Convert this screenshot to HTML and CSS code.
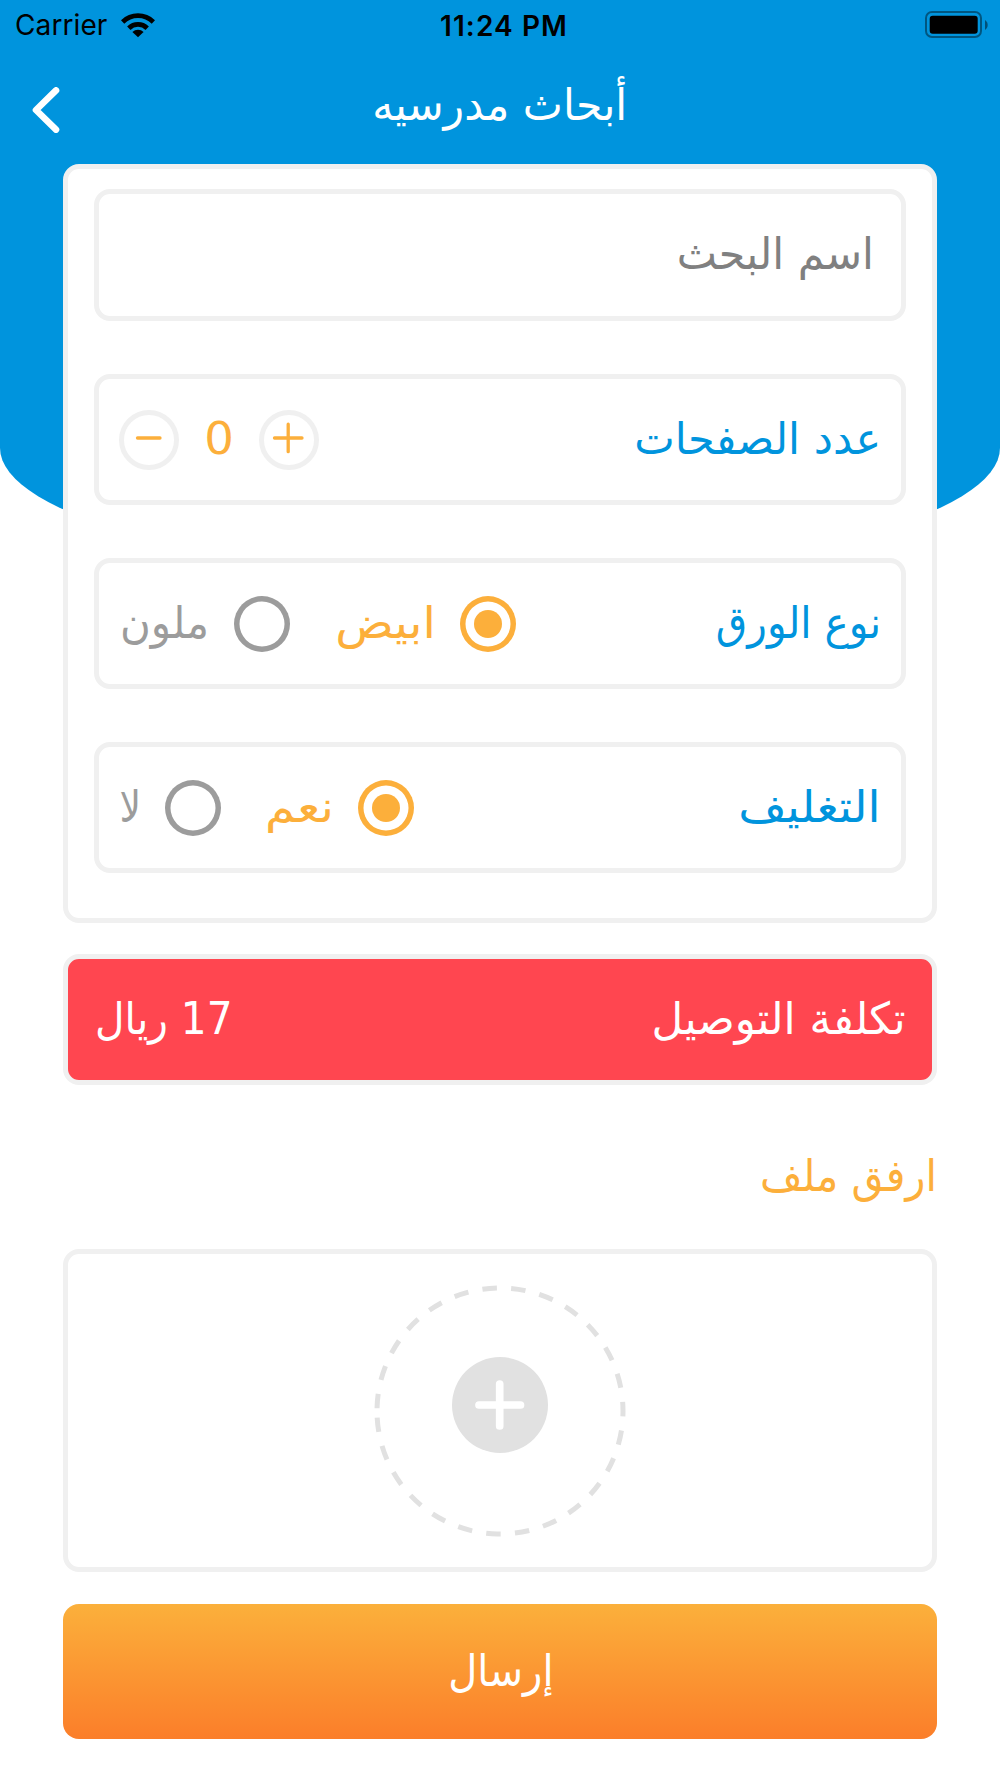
FILE: index.html
```html
<!DOCTYPE html>
<html lang="ar">
<head>
<meta charset="utf-8">
<title>أبحاث مدرسيه</title>
<link rel="stylesheet" href="styles.css">
</head>
<body>
<div class="screen">
  <header class="hero">
    <div class="status">
      <div class="carrier"><span>Carrier</span>
        <svg class="wifi" width="34" height="25" viewBox="0 0 34 25"><path d="M17 24.300l-5.600-5.300a8.200 8.200 0 0 1 11.200 0z"/><path d="M7.800 15.200a13.200 13.200 0 0 1 18.400 0" fill="none" stroke="#000" stroke-width="4.800"/><path d="M1.600 9a22 22 0 0 1 30.800 0" fill="none" stroke="#000" stroke-width="4.800"/></svg>
      </div>
      <div class="clock">11:24 PM</div>
      <svg class="battery" width="64" height="28" viewBox="0 0 64 28"><rect x="1" y="1" width="55" height="25" rx="6" fill="none" stroke="#000" stroke-opacity=".42" stroke-width="2"/><rect x="4.700" y="4.700" width="48" height="18" rx="3"/><path d="M60 9a6 6 0 0 1 0 10z" fill-opacity=".45"/></svg>
    </div>
    <div class="nav">
      <svg class="back" width="28" height="46" viewBox="0 0 28 46"><path d="M24 3.400L4 23L24 42.600" fill="none" stroke="#fff" stroke-width="6.600" stroke-linecap="round" stroke-linejoin="round"/></svg>
      <h1 class="title"><span class="t-title">أبحاث مدرسيه</span></h1>
    </div>
  </header>
  <main class="content" dir="rtl">
    <section class="card">
      <div class="field field-input"><span class="t-name">اسم البحث</span></div>
      <div class="field"><span class="t-pages">عدد الصفحات</span>
        <div class="stepper">
          <div class="round"><svg width="50" height="50" viewBox="0 0 50 50"><path d="M10.500 23H38M24.200 9.200V36.700"/></svg></div>
          <span class="count">0</span>
          <div class="round"><svg width="50" height="50" viewBox="0 0 50 50"><path d="M13.500 23H36"/></svg></div>
        </div>
      </div>
      <div class="field"><span class="t-paper">نوع الورق</span>
        <div class="options">
          <div class="option on"><i class="radio"></i><span class="t-white">ابيض</span></div>
          <div class="option"><i class="radio"></i><span class="t-color">ملون</span></div>
        </div>
      </div>
      <div class="field"><span class="t-cover">التغليف</span>
        <div class="options">
          <div class="option on"><i class="radio"></i><span class="t-yes">نعم</span></div>
          <div class="option"><i class="radio"></i><span class="t-no">لا</span></div>
        </div>
      </div>
    </section>
    <section class="cost"><span class="t-cost">تكلفة التوصيل</span><span class="t-price">17 ريال</span></section>
    <h2 class="attach"><span class="t-attach">ارفق ملف</span></h2>
    <section class="upload">
      <svg width="252" height="252" viewBox="0 0 252 252"><path d="M3 126A123 123 0 0 1 249 126A123 123 0 0 1 3 126" transform="rotate(1.250 126 126)" fill="none" stroke="#e1e1e1" stroke-width="5" stroke-dasharray="14.500 14.300"/><circle cx="126" cy="120" r="48" fill="#e1e1e1"/><path d="M105 120H146.500M125.700 99V141" stroke="#fff" stroke-width="7.700" stroke-linecap="round"/></svg>
    </section>
    <button class="submit"><span class="t-send">إرسال</span></button>
  </main>
</div>
</body>
</html>
```
FILE: styles.css
```css
* { box-sizing: border-box; }
body { margin: 0; background: #fff; font-family: "DejaVu Sans", "Noto Sans", sans-serif; }
.screen { width: 1000px; height: 1778px; display: grid; background: #fff; overflow: hidden; }
.hero, .content { grid-area: 1 / 1; }
.hero { height: 574px; background: #0094dd; border-radius: 0 0 500px 500px / 0 0 126px 126px; }
.status { height: 50px; display: grid; grid-template-columns: 1fr auto 1fr; align-items: center; padding: 0 11px 0 15px; font-family: Inter, sans-serif; font-size: 28px; color: #000; }
.carrier { display: flex; align-items: center; gap: 14px; letter-spacing: 0.1px; }
.clock { font-weight: 600; letter-spacing: 1.1px; padding-left: 4px; padding-top: 1px; }
.battery { justify-self: end; margin-top: -1px; }
.nav { height: 114px; display: grid; grid-template-columns: 100px 1fr 100px; align-items: center; }
.back { margin: 6px 0 0 32px; }
.title { margin: 0; text-align: center; color: #fff; font-size: 44px; font-weight: 400; line-height: 60px; }
.content { padding: 164px 63px 0; z-index: 1; font-size: 44px; line-height: 60px; }
.content span, .title span { display: inline-block; white-space: nowrap; transform-origin: right center; }
.card { height: 759px; border: 5px solid #f0f0f0; border-radius: 16px; background: #fff; padding: 20px 26px; display: flex; flex-direction: column; gap: 53px; }
.field { height: 131px; flex: none; border: 5px solid #f0f0f0; border-radius: 16px; display: flex; align-items: center; justify-content: space-between; padding: 0 20px; color: #0094dd; }
.field-input { height: 132px; color: #808080; padding: 0 27px; }
.stepper { display: flex; align-items: center; color: #fcaf3b; }
.round { width: 60px; height: 60px; border: 5px solid #f0f0f0; border-radius: 50%; }
.round svg { display: block; fill: none; stroke: #fcaf3b; stroke-width: 3.3; stroke-linecap: round; }
.content .count { width: 80px; text-align: center; transform-origin: center; transform: translateY(-1px) scaleX(1.06); }
.options { display: flex; gap: 46px; }
.option { display: flex; align-items: center; gap: 27px; color: #9c9c9c; }
.on { color: #fcaf3b; }
.radio { width: 56px; height: 56px; box-shadow: inset 0 0 0 5.5px currentColor; border-radius: 50%; display: grid; place-items: center; }
.on .radio::after { content: ""; width: 28px; height: 28px; border-radius: 50%; background: currentColor; }

/* Optical width of each Arabic label */
.title .t-title { transform-origin: center; transform: translateY(-2px) scaleX(.968); }
.t-name { transform: translateY(-1px) scaleX(.972); }
.t-pages { transform: translateY(-1px) scaleX(.979); }
.t-paper { transform: translateY(-1px) scaleX(.923); }
.t-cover { transform: translateY(-1px) scaleX(1.066); }
.t-white { width: 97px; transform: translate(3px, -1px) scaleX(1.1); }
.t-color { width: 88px; transform: translate(2px, -1px) scaleX(.955); }
.t-yes { width: 64px; transform: translate(3px, -1px) scaleX(1.1); }
.t-no { width: 19px; transform: translate(3px, -1px) scaleX(.86); }
.t-cost { transform: translateY(-1px) scaleX(.99); }
.content .t-price { transform-origin: left center; transform: translateY(-1px) scaleX(.924); }
.t-attach { transform: scaleX(.936); }
.content .t-send { transform-origin: center; transform: translate(1px, -1px) scaleX(.91); }

.cost { height: 131px; margin-top: 31px; border: 5px solid #f0f0f0; border-radius: 16px; background: #ff4650; padding: 0 26px 0 27px; color: #fff; display: flex; align-items: center; justify-content: space-between; }
.attach { margin: 61px 0 0; height: 103px; font-size: 44px; font-weight: 400; color: #fcaf3b; }
.upload { height: 323px; border: 5px solid #f0f0f0; border-radius: 16px; display: flex; align-items: center; justify-content: center; }
.submit { display: block; width: 100%; height: 135px; margin-top: 32px; border: 0; border-radius: 16px; background: linear-gradient(#fbb03b, #fb7e2a); color: #fff; font-family: inherit; font-size: 44px; line-height: 60px; }
```
